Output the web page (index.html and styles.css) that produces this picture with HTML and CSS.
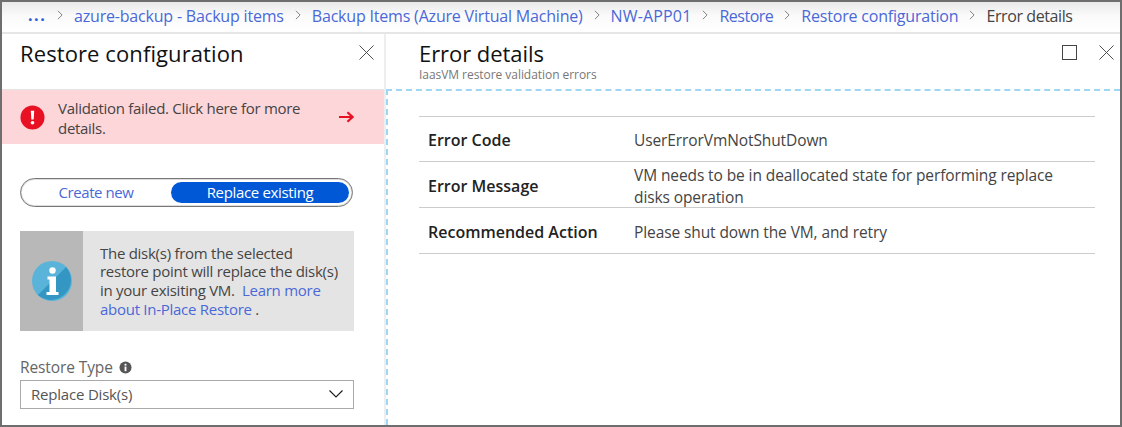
FILE: index.html
```html
<!DOCTYPE html>
<html lang="en">
<head>
<meta charset="utf-8">
<title>Error details</title>
<link rel="stylesheet" href="styles.css">
</head>
<body>
<div class="frame">
  <nav class="crumbs">
    <a class="dots">...</a>
    <svg class="chev" viewBox="0 0 7 12"><path d="M1 1l5 5-5 5"/></svg>
    <a>azure-backup - Backup items</a>
    <svg class="chev" viewBox="0 0 7 12"><path d="M1 1l5 5-5 5"/></svg>
    <a>Backup Items (Azure Virtual Machine)</a>
    <svg class="chev" viewBox="0 0 7 12"><path d="M1 1l5 5-5 5"/></svg>
    <a class="vm">NW-APP01</a>
    <svg class="chev" viewBox="0 0 7 12"><path d="M1 1l5 5-5 5"/></svg>
    <a class="tight">Restore</a>
    <svg class="chev" viewBox="0 0 7 12"><path d="M1 1l5 5-5 5"/></svg>
    <a>Restore configuration</a>
    <svg class="chev" viewBox="0 0 7 12"><path d="M1 1l5 5-5 5"/></svg>
    <span class="current">Error details</span>
  </nav>
  <div class="panes">
    <section class="left">
      <header class="left-head">
        <h1>Restore configuration</h1>
        <svg class="close" viewBox="0 0 16 16"><path d="M.5.5l15 15M15.500.5l-15 15"/></svg>
      </header>
      <div class="alert">
        <svg class="alert-icon" viewBox="0 0 26 26"><circle cx="13" cy="13" r="12.500" fill="#e81123"/><path d="M11.200 6h3.600l-.6 9h-2.400z" fill="#fff"/><circle cx="13" cy="18.500" r="1.900" fill="#fff"/></svg>
        <p>Validation failed. Click here for more details.</p>
        <svg class="alert-arrow" viewBox="0 0 16 12"><path d="M0 6h14M9 1l5.500 5L9 11"/></svg>
      </div>
      <div class="toggle">
        <span class="opt">Create new</span>
        <span class="opt on">Replace existing</span>
      </div>
      <div class="info">
        <div class="info-side">
          <svg viewBox="0 0 40 40"><circle cx="20" cy="20" r="20" fill="#5ab4d9"/><path d="M34.100 5.900A20 20 0 0 1 5.900 34.100z" fill="#3497c3"/><circle cx="20.500" cy="9.500" r="3.200" fill="#fff"/><path d="M15.500 15.500h8.500v15.500h2.500v3h-12v-3h3v-12.500h-2z" fill="#fff"/></svg>
        </div>
        <p>The disk(s) from the selected restore point will replace the disk(s) in your exisiting VM. &nbsp;<a>Learn more about In-Place Restore</a> .</p>
      </div>
      <div class="label">Restore Type <svg viewBox="0 0 14 14"><circle cx="7" cy="7" r="6.500" fill="#555"/><rect x="6" y="6" width="2" height="5" fill="#fff"/><rect x="6" y="3" width="2" height="2" fill="#fff"/></svg></div>
      <div class="select">
        <span>Replace Disk(s)</span>
        <svg viewBox="0 0 14 8"><path d="M.5.500L7 7l6.500-6.500"/></svg>
      </div>
    </section>
    <section class="right">
      <header class="right-head">
        <div>
          <h2>Error details</h2>
          <div class="sub">IaasVM restore validation errors</div>
        </div>
        <div class="win">
          <span class="max"></span>
          <svg class="close" viewBox="0 0 16 16"><path d="M.5.500l15 15M15.500.5l-15 15"/></svg>
        </div>
      </header>
      <div class="body">
        <div class="table">
          <div class="row"><b>Error Code</b><span>UserErrorVmNotShutDown</span></div>
          <div class="row"><b>Error Message</b><span>VM needs to be in deallocated state for performing replace disks operation</span></div>
          <div class="row"><b>Recommended Action</b><span>Please shut down the VM, and retry</span></div>
        </div>
      </div>
    </section>
  </div>
</div>
</body>
</html>
```
FILE: styles.css
```css
* { box-sizing: border-box; }
html, body { margin: 0; height: 100%; }
body { font-family: "Open Sans", "Noto Sans", sans-serif; color: #333; background: #fff; overflow: hidden; }
a { color: #4a68d8; }
p { margin: 0; }
.frame { width: 1122px; height: 427px; border: 2px solid #6e6e6e; display: flex; flex-direction: column; overflow: hidden; }
.crumbs { height: 32px; flex: none; display: flex; align-items: center; padding: 0 0 2px 25px; font-size: 16px; letter-spacing: -.19px; white-space: nowrap; background: linear-gradient(#e9e9e9, #fafafa 45%, #fff); border-bottom: 2px solid #e6e6e6; }
.crumbs a.dots { font-weight: 700; letter-spacing: 1.500px; color: #2a5bd7; margin-bottom: 2px; width: 30px; padding-left: 1px; }
.crumbs a.vm { letter-spacing: .15px; }
.crumbs a.tight { letter-spacing: -.5px; }
.chev { width: 6px; height: 10px; fill: none; stroke: #777; stroke-width: 1.100; margin: 0 11px 2px 11px; flex: none; }
.crumbs a.dots + .chev { margin-left: 0; margin-right: 11px; }
.current { color: #444; letter-spacing: -.4px; }
.panes { flex: 1; display: flex; min-height: 0; }
.left { width: 384px; flex: none; border-right: 2px solid #eee; display: flex; flex-direction: column; }
.left-head { height: 56px; flex: none; display: flex; justify-content: space-between; padding: 4px 10px 0 18px; border-bottom: 1px solid #e4e4e4; }
h1 { margin: 0; font-size: 22px; font-weight: 400; color: #111; letter-spacing: .1px; line-height: 30px; }
.close { width: 15px; height: 15px; fill: none; stroke: #444; stroke-width: 1; margin-top: 7px; flex: none; }
.alert { height: 54px; flex: none; background: #fdd6da; display: flex; align-items: center; padding: 0 30px 0 18px; color: #444; font-size: 15px; letter-spacing: -.3px; line-height: 20px; }
.alert-icon { width: 25px; height: 25px; flex: none; margin-right: 13px; }
.alert p { width: 266px; padding-top: 1px; }
.alert-arrow { width: 15px; height: 12px; flex: none; margin-left: auto; fill: none; stroke: #e81123; stroke-width: 2.300; }
.toggle { margin: 34px 0 0 18px; width: 333px; height: 29px; flex: none; border: 1px solid #777; border-radius: 15px; display: flex; align-items: center; padding: 0 3px 0 2px; font-size: 15px; letter-spacing: -.35px; box-shadow: inset 0 0 0 1px #ddd; }
.opt { flex: 1; text-align: center; color: #4a68d8; line-height: 21px; letter-spacing: -.42px; padding-right: 2px; }
.opt.on { flex: none; width: 178px; background: #0058d6; color: #fff; border-radius: 11px; letter-spacing: -.35px; padding-right: 0; }
.info { margin: 24px 0 0 18px; width: 334px; height: 100px; flex: none; background: #e4e4e4; display: flex; align-items: center; font-size: 15px; letter-spacing: -.27px; line-height: 18.600px; color: #444; }
.info-side { width: 63px; height: 100%; background: #b8b8b8; flex: none; display: flex; align-items: center; justify-content: center; }
.info-side svg { width: 40px; height: 40px; }
.info p { padding-left: 17px; width: 243px; box-sizing: content-box; }
.label { margin: 26px 0 0 18px; font-size: 15.500px; letter-spacing: -.1px; color: #666; line-height: 20px; display: flex; align-items: center; gap: 6px; }
.label svg { width: 13px; height: 13px; }
.select { margin: 3px 0 0 18px; width: 334px; height: 29px; flex: none; border: 1px solid #aaa; display: flex; align-items: center; justify-content: space-between; padding: 0 10px 1px; font-size: 15px; letter-spacing: -.2px; color: #555; }
.select svg { width: 14px; height: 8px; fill: none; stroke: #222; stroke-width: 1.200; }
.right { flex: 1; display: flex; flex-direction: column; min-width: 0; }
.right-head { height: 55px; flex: none; display: flex; justify-content: space-between; padding: 4px 6px 0 33px; }
h2 { margin: 0; font-size: 22px; font-weight: 400; color: #111; letter-spacing: -.05px; line-height: 30px; }
.sub { font-size: 12px; letter-spacing: -.05px; color: #777; line-height: 12px; margin-top: 1px; }
.win { display: flex; gap: 22px; }
.max { width: 15px; height: 15px; border: 1px solid #444; margin-top: 7px; }
.body { flex: 1; border-top: 2px dashed #9ed6f3; border-left: 2px dashed #9ed6f3; padding: 25px 25px 0 31px; }
.table { border-top: 1px solid #ccc; font-size: 15.500px; letter-spacing: -.1px; line-height: 22px; color: #444; }
.row { display: flex; align-items: center; border-bottom: 1px solid #ccc; height: 45px; padding: 2px 0 0 9px; }
.row b { width: 206px; flex: none; font-weight: 600; font-size: 16px; letter-spacing: 0; color: #222; }
.row span { max-width: 435px; }
.row + .row { height: 46px; }
```
